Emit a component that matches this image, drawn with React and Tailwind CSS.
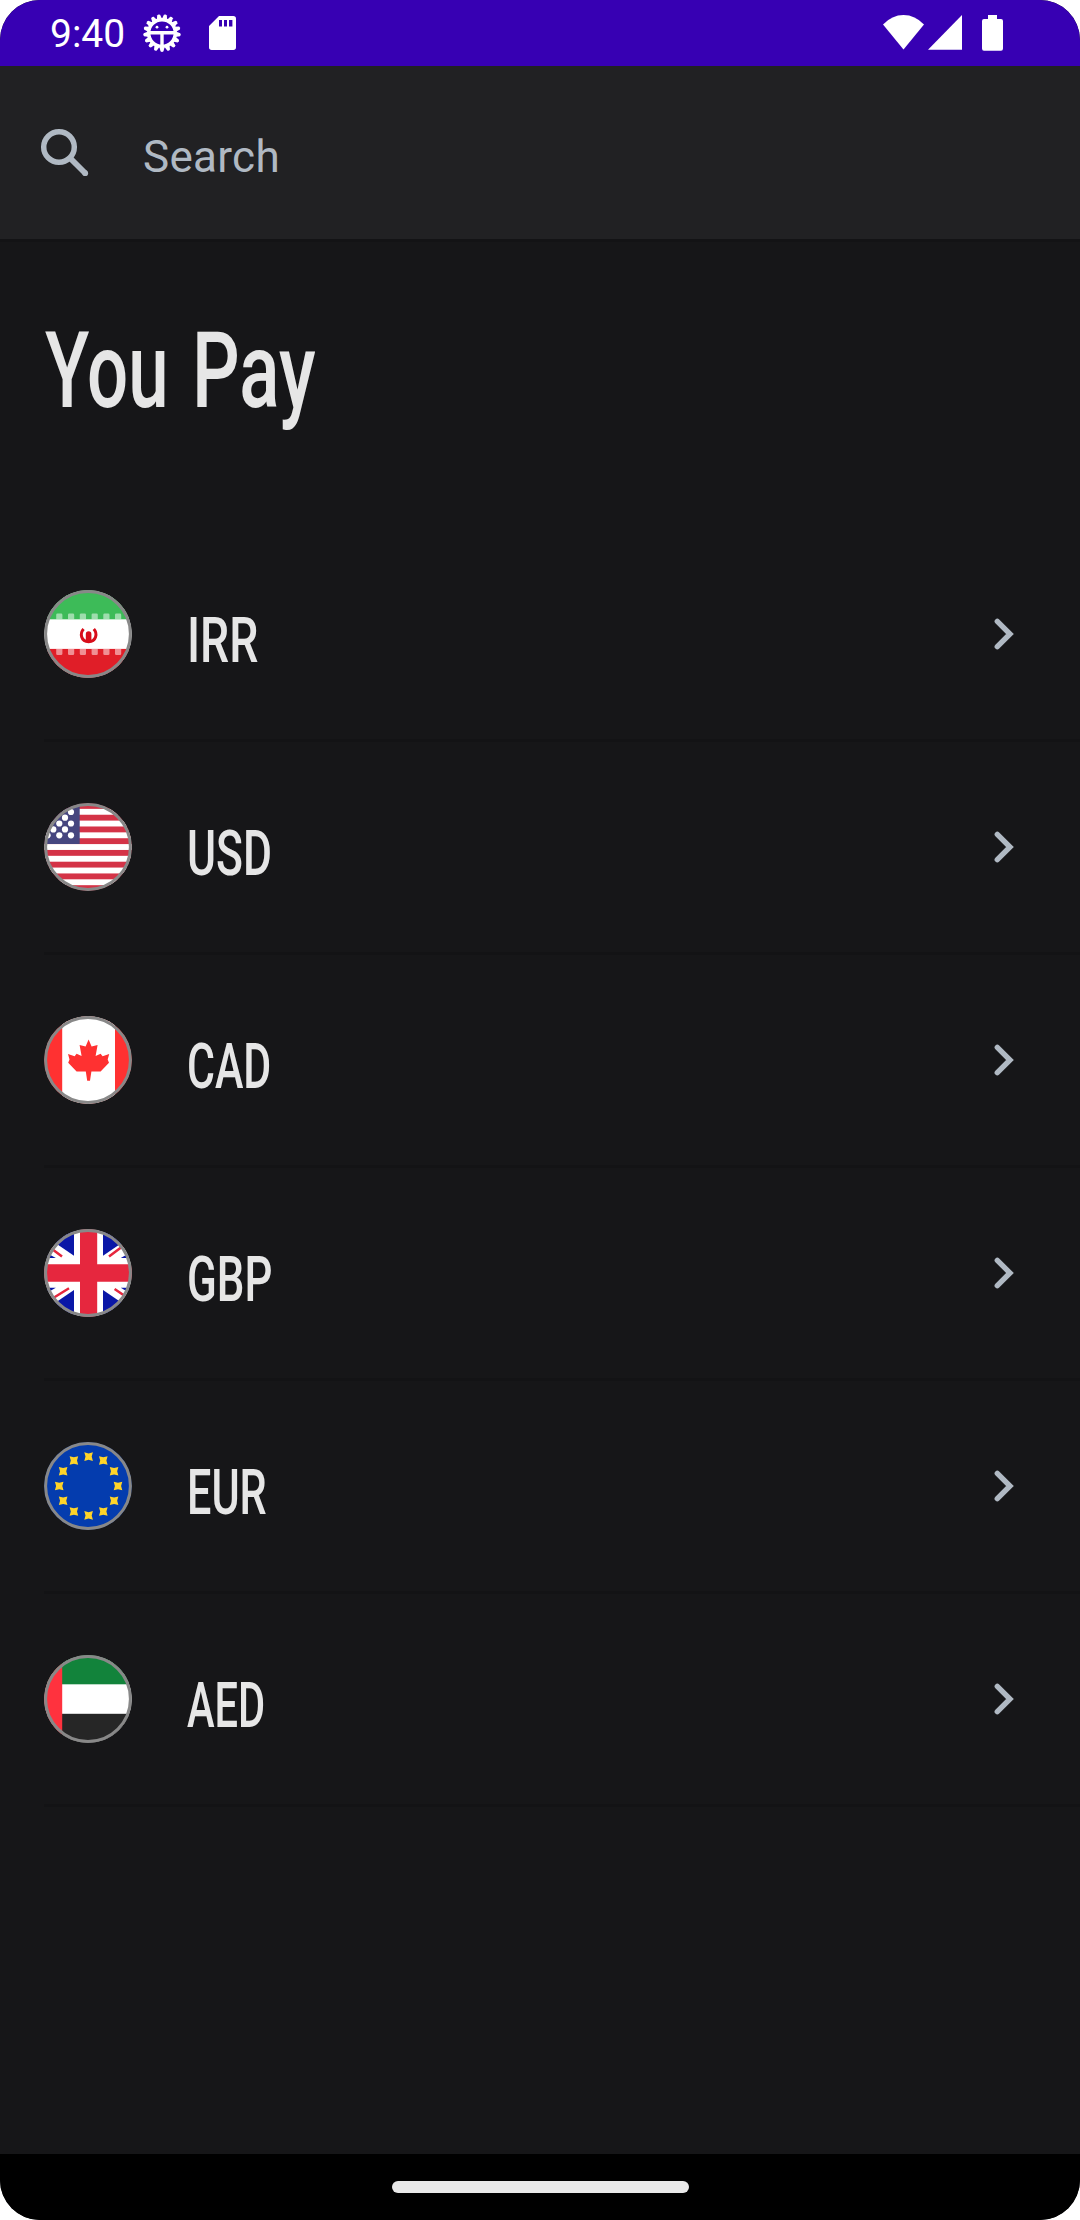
import React from "react";

function Flag({ id, children }) {
  return (
    <svg className="h-[88px] w-[88px] shrink-0" viewBox="0 0 88 88">
      <defs>
        <clipPath id={id}>
          <circle cx="44" cy="44" r="43.8" />
        </clipPath>
      </defs>
      <g clipPath={`url(#${id})`}>{children}</g>
      <circle cx="44" cy="44" r="42.4" fill="none" stroke="#888888" strokeWidth="3" />
    </svg>
  );
}

function IranFlag() {
  const xs = [12.2, 24, 35.8, 47.6, 59.3, 71];
  return (
    <Flag id="flag-irr">
      <rect width="88" height="88" fill="#fff" />
      <rect width="88" height="29.3" fill="#3dbb58" />
      <rect y="58.9" width="88" height="30" fill="#e01e28" />
      {xs.map((x) => (
        <g key={x} fill="#fff" fillOpacity="0.5">
          <path d={`M${x} 29.3v-4.6q0-1.3 1.3-1.3h3.6q1.3 0 1.3 1.3v4.6z`} />
          <path d={`M${x} 58.9v4.8q0 1.3 1.3 1.3h3.6q1.3 0 1.3-1.3v-4.8z`} />
        </g>
      ))}
      <path d="M39.6 39C35.5 43.5 37 51.7 44.6 51.7S53.8 43.5 49.8 39" fill="none" stroke="#d80d1a" strokeWidth="3" />
      <path d="M41.8 52V44q0-2.8 2.8-2.8t2.8 2.8V52z" fill="#d80d1a" />
    </Flag>
  );
}

function UsFlag() {
  const stripes = [1, 3, 5, 7, 9, 11, 13];
  const stars = [[27, 9], [21, 14.7], [15.3, 20.5], [27, 20.5], [9.3, 26.4], [21, 26.4], [3.6, 32.3], [15.3, 32.3], [27, 32.3]];
  return (
    <Flag id="flag-usd">
      <rect width="88" height="88" fill="#d43347" />
      {stripes.map((n) => (
        <rect key={n} y={n * 5.87} width="88" height="5.87" fill="#fff" />
      ))}
      <rect width="35.7" height="41" fill="#46467f" />
      {stars.map(([x, y]) => (
        <circle key={`${x}-${y}`} cx={x} cy={y} r="3.1" fill="#fff" />
      ))}
    </Flag>
  );
}

function CanadaFlag() {
  return (
    <Flag id="flag-cad">
      <rect width="88" height="88" fill="#ff3131" />
      <rect x="18.2" width="52.8" height="88" fill="#fff" />
      <path
        d="M44.6 23.5L47.6 30.6 53.6 29 51.6 40 56.6 37.7 58.6 40.2 65.2 38 63.7 43.5 65 46.7 56.6 55.6H47.4L46 64.7H43.2L41.8 55.6H32.6L24.2 46.7 25.5 43.5 24 38 30.6 40.2 32.6 37.7 37.6 40 35.6 29 41.6 30.6z"
        fill="#ff3131"
      />
    </Flag>
  );
}

function UkFlag() {
  return (
    <Flag id="flag-gbp">
      <rect width="88" height="88" fill="#fff" />
      <g fill="#0a17a7">
        <path d="M30 0V26.8L8 11.8V0z" />
        <path d="M59 0V26.8L81 11.8V0z" />
        <path d="M30 88V61L8 76V88z" />
        <path d="M59 88V61L81 76V88z" />
        <path d="M0 22.5L11.8 29H0z" />
        <path d="M88 22.5L76.8 29H88z" />
        <path d="M0 65.5L11.8 58.8H0z" />
        <path d="M88 65.5L76.8 58.8H88z" />
      </g>
      <g stroke="#e6273e" strokeWidth="2.5">
        <path d="M4 17L18 27.5M79 17L65 27.5M8 69.8L25 59.3M82 67.7L70.6 60" />
      </g>
      <path d="M36 0H53.2V35.2H88V52.8H53.2V88H36V52.8H0V35.2H36z" fill="#e6273e" />
    </Flag>
  );
}

function EuFlag() {
  const angles = [0, 30, 60, 90, 120, 150, 180, 210, 240, 270, 300, 330];
  return (
    <Flag id="flag-eur">
      <rect width="88" height="88" fill="#043cae" />
      {angles.map((a) => (
        <path
          key={a}
          transform={`translate(${44.6 + 29.4 * Math.sin((a * Math.PI) / 180)} ${44 - 29.4 * Math.cos((a * Math.PI) / 180)})`}
          d="M-4.3-4.3L0-3.2 4.3-4.3 3.1 0 4.3 4.3 0 3.2-4.3 4.3-3.1 0z"
          fill="#ffd429"
        />
      ))}
    </Flag>
  );
}

function UaeFlag() {
  return (
    <Flag id="flag-aed">
      <rect width="88" height="88" fill="#fff" />
      <rect width="88" height="29.3" fill="#12833b" />
      <rect y="58.8" width="88" height="30" fill="#262626" />
      <rect width="18.2" height="88" fill="#ff323e" />
    </Flag>
  );
}

const currencies = [
  { code: "IRR", Icon: IranFlag, fit: "scale-x-[0.735]" },
  { code: "USD", Icon: UsFlag, fit: "scale-x-[0.705]" },
  { code: "CAD", Icon: CanadaFlag, fit: "scale-x-[0.68]" },
  { code: "GBP", Icon: UkFlag, fit: "scale-x-[0.695]" },
  { code: "EUR", Icon: EuFlag, fit: "scale-x-[0.685]" },
  { code: "AED", Icon: UaeFlag, fit: "scale-x-[0.66]" },
];

function DebugIcon() {
  const teeth = Array.from({ length: 17 }, (_, i) => 180 + (i * 360) / 17);
  return (
    <svg className="ml-[17px] h-10 w-10" viewBox="-20 -20 40 40">
      {teeth.map((a) => (
        <path key={a} d="M-2.9-13L-1.5-18.2Q0-19.6 1.5-18.2L2.9-13z" fill="#fff" transform={`rotate(${a})`} />
      ))}
      <circle r="13.3" fill="none" stroke="#fff" strokeWidth="3.4" />
      <path d="M-12-0.2H12M0 0V13" fill="none" stroke="#fff" strokeWidth="3.4" />
      <circle cx="-5" cy="-5.8" r="1.4" fill="#fff" />
      <circle cx="5" cy="-5.8" r="1.4" fill="#fff" />
    </svg>
  );
}

function StatusBar() {
  return (
    <header className="flex h-[66px] items-center bg-[#3700b3] pl-[50px] pr-[77px] text-white">
      <span className="w-[75px] pt-[3px] text-[39px] leading-none">9:40</span>
      <DebugIcon />
      <svg className="ml-[27px] h-[34px] w-[27px]" viewBox="0 0 27 34">
        <path fillRule="evenodd" fill="#fff" d="M10 0H24.3Q27 0 27 2.7V31.3Q27 34 24.3 34H2.7Q0 34 0 31.3V10zM10 4V10.4H13V4zM15 4V10.4H18V4zM20 4V10.4H23.4V4z" />
      </svg>
      <div className="ml-auto flex items-center">
        <svg className="h-9 w-[41px]" viewBox="0 0 41 36">
          <path d="M0 9.5Q9 0 20.5 0T41 9.5L20.5 34.5z" fill="#fff" />
        </svg>
        <svg className="ml-1 h-9 w-[34px]" viewBox="0 0 34 36">
          <path d="M34 0V34.8H0z" fill="#fff" />
        </svg>
        <svg className="ml-5 h-9 w-[21px]" viewBox="0 0 21 36">
          <path d="M6 0H15V4H19Q21 4 21 6V33.5Q21 35.7 19 35.7H2Q0 35.7 0 33.5V6Q0 4 2 4H6z" fill="#fff" />
        </svg>
      </div>
    </header>
  );
}

function CurrencyRow({ code, Icon, fit }) {
  return (
    <li className="ml-11 flex h-[213px] items-center border-b-[3px] border-[#131315]">
      <Icon />
      <span className={`ml-[55px] mt-[12px] inline-block origin-left text-[63px] font-medium leading-none ${fit}`}>{code}</span>
      <svg className="ml-auto mr-[66px] h-8 w-5" viewBox="0 0 20 32">
        <path d="M3.3 3.3L16 16 3.3 28.7" fill="none" stroke="#b0b9c3" strokeWidth="5.4" strokeLinecap="round" />
      </svg>
    </li>
  );
}

export default function App() {
  return (
    <div className="h-[2220px] w-[1080px] bg-white font-['Roboto',sans-serif]">
      <div className="flex h-full flex-col overflow-hidden rounded-[40px] bg-[#161618] text-[#e6e6e6]">
        <StatusBar />
        <label className="flex h-[173px] items-center bg-[#212123] pl-10 text-[#b0b9c3]">
          <svg className="h-[50px] w-[50px]" viewBox="0 0 50 50">
            <circle cx="19" cy="19" r="15.3" fill="none" stroke="currentColor" strokeWidth="5.5" />
            <path d="M30.5 30.5L45.3 45.3" stroke="currentColor" strokeWidth="5.8" />
            <circle cx="45.2" cy="45.2" r="2.9" fill="currentColor" />
          </svg>
          <span className="ml-[53px] pt-2 text-[44px] leading-none tracking-[0.3px]">Search</span>
        </label>
        <div className="h-[3px] bg-[#131315]" />
        <main className="flex-1">
          <h1 className="flex h-[287px] pl-[45px] pt-[76px] text-[106px] font-medium leading-none">
            <span className="inline-block w-[147px] origin-left scale-x-[0.685]">You</span>
            <span className="inline-block origin-left scale-x-[0.705]">Pay</span>
          </h1>
          <ul>
            {currencies.map((c) => (
              <CurrencyRow key={c.code} {...c} />
            ))}
          </ul>
        </main>
        <nav className="flex h-[66px] justify-center bg-black pt-[27px]">
          <span className="h-3 w-[297px] rounded-full bg-[#e9e9e9]" />
        </nav>
      </div>
    </div>
  );
}
